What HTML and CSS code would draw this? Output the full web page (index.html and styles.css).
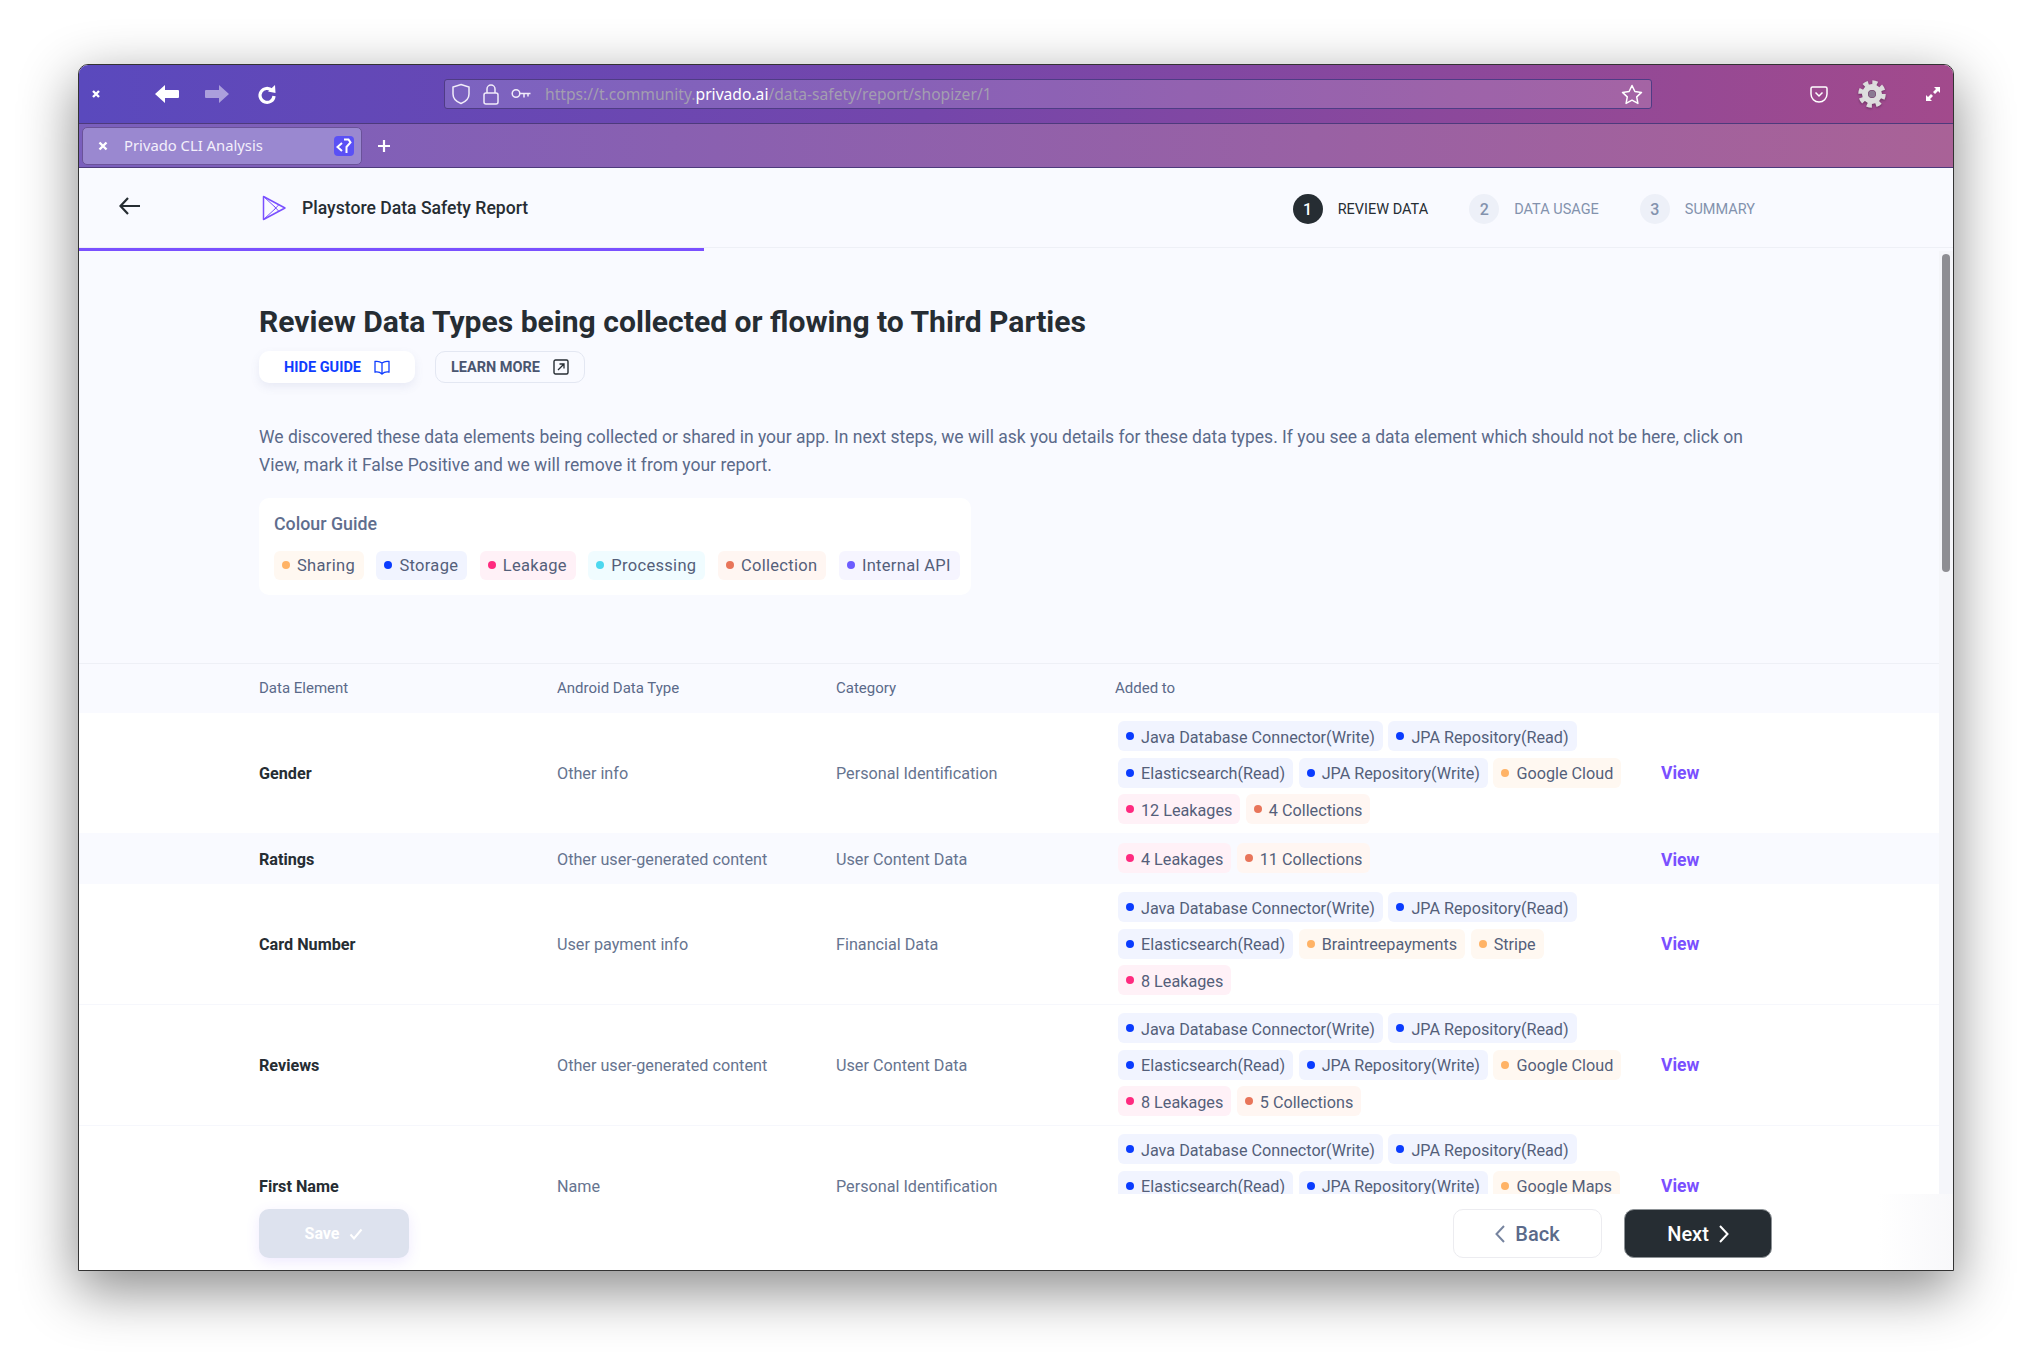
FILE: index.html
```html
<!DOCTYPE html>
<html lang="en">
<head>
    <meta charset="UTF-8">
    <title>Privado CLI Analysis</title>
    <link rel="stylesheet" href="styles.css">
</head>
<body>
    <div class="window">
        <div class="toolbar">
            <svg class="win-close" width="10" height="10" viewBox="0 0 10 10"><path d="M2 2l6 6M8 2l-6 6" stroke="#fff" stroke-width="2.4" fill="none"/></svg>
            <svg class="nav-back" width="24" height="18" viewBox="0 0 24 18"><path d="M0 9l10-9v5h13a1 1 0 0 1 1 1v6a1 1 0 0 1-1 1H10v5z" fill="#fff"/></svg>
            <svg class="nav-forward" width="24" height="18" viewBox="0 0 24 18"><path d="M24 9l-10-9v5H1a1 1 0 0 0-1 1v6a1 1 0 0 0 1 1h13v5z" fill="#ab9fdc"/></svg>
            <svg class="nav-reload" width="20" height="21" viewBox="0 0 20 21"><path d="M15 6.5A7 7 0 1 0 17 12" stroke="#fff" stroke-width="3.2" fill="none"/><path d="M11 7.5l7.5 1.5L18 1z" fill="#fff"/></svg>
            <div class="urlbar">
                <svg width="20" height="22" viewBox="0 0 20 22"><path d="M10 1.5l8 2.5v7c0 4.5-3.5 7.800-8 9.500-4.500-1.700-8-5-8-9.500V4z" stroke="#f1ecfa" stroke-width="1.500" fill="none"/></svg>
                <svg width="16" height="22" viewBox="0 0 16 22"><path d="M4 10V6a4 4 0 0 1 8 0v4" stroke="#f1ecfa" stroke-width="1.500" fill="none"/><rect x="1" y="10" width="14" height="11" rx="2" stroke="#f1ecfa" stroke-width="1.500" fill="none"/></svg>
                <svg width="20" height="12" viewBox="0 0 20 12"><circle cx="5" cy="5.500" r="3.800" stroke="#f1ecfa" stroke-width="1.500" fill="none"/><path d="M9 5.500h10.500M13 5.500v4M17 5.500v3" stroke="#f1ecfa" stroke-width="1.500" fill="none"/></svg>
                <div class="url"><span class="url-dim">https://t.community.</span>privado.ai<span class="url-dim">/data-safety/report/shopizer/1</span></div>
                <svg class="star" width="22" height="21" viewBox="0 0 22 21"><path d="M11 1.500l2.900 6 6.600.9-4.800 4.500 1.200 6.500-5.900-3.200-5.900 3.200 1.200-6.500L1.500 8.400l6.600-.9z" stroke="#fff" stroke-width="1.500" stroke-linejoin="round" fill="none"/></svg>
            </div>
            <svg class="pocket" width="18" height="17" viewBox="0 0 18 17"><path d="M2.500 1h13A1.500 1.500 0 0 1 17 2.500V8a8 8 0 0 1-16 0V2.500A1.500 1.500 0 0 1 2.500 1z" stroke="#fff" stroke-width="1.500" fill="none"/><path d="M5.500 6.500L9 10l3.500-3.500" stroke="#fff" stroke-width="1.500" fill="none"/></svg>
            <svg class="gear" width="28" height="28" viewBox="0 0 28 28"><circle cx="14" cy="14" r="11.500" fill="none" stroke="#dcdcdc" stroke-width="4.500" stroke-dasharray="5 4.030"/><circle cx="14" cy="14" r="7" fill="none" stroke="#dedede" stroke-width="6"/><circle cx="14" cy="14" r="3.500" fill="#8a7a92"/></svg>
            <svg class="expand" width="14" height="14" viewBox="0 0 14 14"><path d="M8 0h6v6l-2-2-3 3-2-2 3-3zM6 14H0V8l2 2 3-3 2 2-3 3z" fill="#fff"/></svg>
        </div>
        <div class="tabbar">
            <div class="tab">
                <svg width="10" height="10" viewBox="0 0 10 10"><path d="M1.500 1.500l7 7M8.500 1.500l-7 7" stroke="#fff" stroke-width="2.400" fill="none"/></svg>
                <span class="tab-title">Privado CLI Analysis</span>
                <svg class="favicon" width="20" height="20" viewBox="0 0 20 20"><rect width="20" height="20" rx="4" fill="#5a50f5"/><path d="M8 7l-4.500 4L8 15" stroke="#fff" stroke-width="2" fill="none"/><path d="M10 3.500h4.500l2 3-4 4.500v6" stroke="#fff" stroke-width="2" fill="none"/></svg>
            </div>
            <svg class="tab-new" width="12" height="12" viewBox="0 0 12 12"><path d="M6 0v12M0 6h12" stroke="#fff" stroke-width="2.200"/></svg>
        </div>

        <header class="app-header">
            <svg class="back-arrow" width="21" height="18" viewBox="0 0 21 18"><path d="M9 1L1.500 9 9 17M2 9h19" stroke="#262d33" stroke-width="2.200" fill="none"/></svg>
            <svg class="play-icon" width="24" height="26" viewBox="0 0 24 26"><path d="M1.500 1.500v23L23 13z" stroke="#7a50ff" stroke-width="1.500" stroke-linejoin="round" fill="none"/><path d="M1.500 1.500L14 13 1.500 24.500M17 9.500L12 15M17 16.500L12 11" stroke="#7a50ff" stroke-width="1" fill="none"/></svg>
            <span class="app-title">Playstore Data Safety Report</span>
            <div class="steps">
                <div class="step step-active"><span class="step-num">1</span>REVIEW DATA</div>
                <div class="step"><span class="step-num">2</span>DATA USAGE</div>
                <div class="step"><span class="step-num">3</span>SUMMARY</div>
            </div>
        </header>
        <div class="progress"><div class="progress-fill"></div></div>

        <div class="scroller">
            <main class="content">
                <div class="intro">
                    <h1>Review Data Types being collected or flowing to Third Parties</h1>
                    <div class="guide-btns">
                        <button class="btn-guide">HIDE GUIDE
                            <svg width="16" height="15" viewBox="0 0 16 15"><path d="M1 1.500c2.500-.5 5 0 7 1.500 2-1.500 4.500-2 7-1.500v10.500c-2.500-.5-5 0-7 2-2-2-4.500-2.500-7-2zM8 3v11" stroke="#0f3dff" stroke-width="1.300" fill="none"/></svg>
                        </button>
                        <button class="btn-learn">LEARN MORE
                            <svg width="16" height="16" viewBox="0 0 16 16"><rect x="1" y="1" width="14" height="14" rx="1.500" stroke="#262d33" stroke-width="1.400" fill="none"/><path d="M5 11l6-6M6.500 5H11v4.500" stroke="#262d33" stroke-width="1.300" fill="none"/></svg>
                        </button>
                    </div>
                    <p class="lead">We discovered these data elements being collected or shared in your app. In next steps, we will ask you details for these data types. If you see a data element which should not be here, click on View, mark it False Positive and we will remove it from your report.</p>
                    <div class="colour-guide">
                        <div class="guide-title">Colour Guide</div>
                        <div class="guide-chips">
                            <span class="chip sharing">Sharing</span>
                            <span class="chip storage">Storage</span>
                            <span class="chip leakage">Leakage</span>
                            <span class="chip processing">Processing</span>
                            <span class="chip collection">Collection</span>
                            <span class="chip internal">Internal API</span>
                        </div>
                    </div>
                </div>

                <div class="row row-head">
                    <div>Data Element</div>
                    <div>Android Data Type</div>
                    <div>Category</div>
                    <div>Added to</div>
                </div>

                <div class="row">
                    <div class="name">Gender</div>
                    <div>Other info</div>
                    <div>Personal Identification</div>
                    <div class="chips">
                        <span class="chip storage">Java Database Connector(Write)</span>
                        <span class="chip storage">JPA Repository(Read)</span>
                        <span class="chip storage">Elasticsearch(Read)</span>
                        <span class="chip storage">JPA Repository(Write)</span>
                        <span class="chip sharing">Google Cloud</span>
                        <span class="chip leakage">12 Leakages</span>
                        <span class="chip collection">4 Collections</span>
                    </div>
                    <a class="view">View</a>
                </div>

                <div class="row row-alt">
                    <div class="name">Ratings</div>
                    <div>Other user-generated content</div>
                    <div>User Content Data</div>
                    <div class="chips">
                        <span class="chip leakage">4 Leakages</span>
                        <span class="chip collection">11 Collections</span>
                    </div>
                    <a class="view">View</a>
                </div>

                <div class="row">
                    <div class="name">Card Number</div>
                    <div>User payment info</div>
                    <div>Financial Data</div>
                    <div class="chips">
                        <span class="chip storage">Java Database Connector(Write)</span>
                        <span class="chip storage">JPA Repository(Read)</span>
                        <span class="chip storage">Elasticsearch(Read)</span>
                        <span class="chip sharing">Braintreepayments</span>
                        <span class="chip sharing">Stripe</span>
                        <span class="chip leakage">8 Leakages</span>
                    </div>
                    <a class="view">View</a>
                </div>

                <div class="row row-line">
                    <div class="name">Reviews</div>
                    <div>Other user-generated content</div>
                    <div>User Content Data</div>
                    <div class="chips">
                        <span class="chip storage">Java Database Connector(Write)</span>
                        <span class="chip storage">JPA Repository(Read)</span>
                        <span class="chip storage">Elasticsearch(Read)</span>
                        <span class="chip storage">JPA Repository(Write)</span>
                        <span class="chip sharing">Google Cloud</span>
                        <span class="chip leakage">8 Leakages</span>
                        <span class="chip collection">5 Collections</span>
                    </div>
                    <a class="view">View</a>
                </div>

                <div class="row row-line">
                    <div class="name">First Name</div>
                    <div>Name</div>
                    <div>Personal Identification</div>
                    <div class="chips">
                        <span class="chip storage">Java Database Connector(Write)</span>
                        <span class="chip storage">JPA Repository(Read)</span>
                        <span class="chip storage">Elasticsearch(Read)</span>
                        <span class="chip storage">JPA Repository(Write)</span>
                        <span class="chip sharing">Google Maps</span>
                        <span class="chip leakage">6 Leakages</span>
                    </div>
                    <a class="view">View</a>
                </div>
            </main>
            <div class="scrollbar"><div class="thumb"></div></div>
        </div>

        <footer class="app-footer">
            <button class="btn-save">Save
                <svg width="14" height="12" viewBox="0 0 14 12"><path d="M1.500 6.500L5 10.500 12.500 1.500" stroke="#fff" stroke-width="2" fill="none"/></svg>
            </button>
            <div class="footer-nav">
                <button class="btn-back">
                    <svg width="10" height="18" viewBox="0 0 10 18"><path d="M9 1L1.500 9 9 17" stroke="#76849f" stroke-width="2" fill="none"/></svg>
                    Back
                </button>
                <button class="btn-next">Next
                    <svg width="10" height="18" viewBox="0 0 10 18"><path d="M1 1l7.500 8L1 17" stroke="#fff" stroke-width="2" fill="none"/></svg>
                </button>
            </div>
        </footer>
    </div>
</body>
</html>
```

FILE: styles.css
```css
* {
    box-sizing: border-box;
}

html, body {
    height: 100%;
}

body {
    margin: 0;
    padding: 64px 78px 92px;
    background-color: #fff;
    font-family: Roboto, Arial, sans-serif;
    overflow: hidden;
}

.window {
    display: flex;
    flex-direction: column;
    height: 1207px;
    border: 1px solid #333;
    border-radius: 10px 10px 0 0;
    background-color: #fff;
    box-shadow: 0 18px 55px 2px rgba(0, 0, 0, 0.45);
    overflow: hidden;
}

/* browser chrome */
.toolbar {
    display: flex;
    align-items: center;
    flex: 0 0 59px;
    background: linear-gradient(to right, #5a49bd, #7446ab 45%, #a24a8c);
    border-bottom: 1px solid #4d3a7c;
}

.win-close {
    margin-left: 12px;
}

.nav-back {
    margin-left: 54px;
}

.nav-forward {
    margin-left: 26px;
}

.nav-reload {
    margin-left: 28px;
}

.urlbar {
    display: flex;
    align-items: center;
    width: 1208px;
    height: 30px;
    margin-left: 167px;
    padding: 0 8px 0 6px;
    border: 1px solid #4f3c85;
    border-radius: 3px;
    background-color: rgba(255, 255, 255, 0.15);
    gap: 12px;
}

.url {
    flex: 1;
    margin-left: 2px;
    font-family: "Noto Sans", sans-serif;
    font-size: 15.650px;
    color: #fff;
    white-space: nowrap;
}

.url-dim {
    color: #a39eb0;
}

.pocket {
    margin-left: 158px;
}

.gear {
    margin-left: 30px;
    filter: drop-shadow(0 1px 1px rgba(0, 0, 0, 0.35));
}

.expand {
    margin-left: 40px;
}

.tabbar {
    display: flex;
    align-items: center;
    flex: 0 0 44px;
    padding-left: 3px;
    background: linear-gradient(to right, #7a5fbd, #a96297);
    border-bottom: 1px solid #4d3a7c;
}

.tab {
    display: flex;
    align-items: center;
    width: 280px;
    height: 38px;
    padding: 0 7px 0 15px;
    border: 1px solid #6a5299;
    border-radius: 5px;
    background-color: #9a88d0;
}

.tab-title {
    flex: 1;
    margin: -2px 0 0 16px;
    font-family: "Noto Sans", sans-serif;
    font-size: 14.800px;
    color: #f3effb;
}

.tab-new {
    margin-left: 16px;
}

/* app header */
.app-header {
    display: flex;
    align-items: center;
    flex: 0 0 80px;
    padding: 0 198px 0 40px;
    background-color: #f9faff;
    border-bottom: 1px solid #eef0f6;
}

.back-arrow {
    margin-top: -3px;
}

.play-icon {
    margin-left: 122px;
}

.app-title {
    margin-left: 16px;
    font-size: 17.600px;
    font-weight: 500;
    color: #262d33;
}

.steps {
    display: flex;
    margin-left: auto;
    margin-top: 3px;
    gap: 41px;
}

.step {
    display: flex;
    align-items: center;
    gap: 15px;
    font-size: 14.500px;
    color: #8392ad;
}

.step-num {
    display: flex;
    align-items: center;
    justify-content: center;
    width: 30px;
    height: 30px;
    border-radius: 50%;
    background-color: #edf0f8;
    font-size: 16px;
    font-weight: 500;
}

.step-active {
    color: #262d33;
}

.step-active .step-num {
    background-color: #262d33;
    color: #fff;
}

.progress {
    flex: 0 0 3px;
    background-color: #f9faff;
}

.progress-fill {
    width: 625px;
    height: 3px;
    background-color: #7a50ff;
}

/* main area */
.scroller {
    display: flex;
    flex: 1;
    min-height: 0;
    background-color: #f9faff;
}

.content {
    flex: 1;
    min-width: 0;
    overflow: hidden;
}

.scrollbar {
    flex: 0 0 14px;
    padding: 3px 3px 0;
    background-color: #f5f6fa;
}

.thumb {
    width: 8px;
    height: 318px;
    border-radius: 4px;
    background-color: #8e8e93;
}

.intro {
    padding: 53px 0 68px 180px;
}

h1 {
    margin: 0;
    font-size: 30.080px;
    line-height: 36px;
    font-weight: 700;
    color: #262d33;
}

.guide-btns {
    display: flex;
    margin-top: 11px;
    gap: 20px;
}

.guide-btns button {
    display: flex;
    align-items: center;
    justify-content: center;
    height: 32px;
    border-radius: 10px;
    font-family: Roboto, Arial, sans-serif;
    font-size: 14.500px;
    font-weight: 700;
    gap: 13px;
}

.btn-guide {
    width: 156px;
    border: none;
    background-color: #fff;
    color: #0f3dff;
    box-shadow: 0 4px 10px rgba(90, 100, 160, 0.1);
}

.btn-learn {
    width: 150px;
    border: 1px solid #e3e7f2;
    background-color: transparent;
    color: #4a5670;
}

.lead {
    width: 1500px;
    margin: 40px 0 19px;
    font-size: 17.500px;
    line-height: 28px;
    color: #5b6a8a;
}

.colour-guide {
    width: 712px;
    height: 97px;
    padding: 16px 15px 0;
    border-radius: 10px;
    background-color: #fff;
}

.guide-title {
    font-size: 17.800px;
    line-height: 20px;
    font-weight: 500;
    color: #5f6e8e;
}

.guide-chips {
    display: flex;
    margin-top: 17px;
    gap: 12.500px;
}

.chip {
    display: inline-flex;
    align-items: center;
    height: 29px;
    padding: 0 9px 0 8px;
    border-radius: 6px;
    font-size: 16.500px;
    letter-spacing: 0.3px;
    color: #545f7a;
    white-space: nowrap;
}

.chip::before {
    content: "";
    flex: none;
    width: 8px;
    height: 8px;
    margin-right: 7px;
    margin-top: -2px;
    border-radius: 50%;
}

.storage { background-color: #f1f4ff; }
.storage::before { background-color: #0a3cff; }
.sharing { background-color: #fff8f1; }
.sharing::before { background-color: #ffb366; }
.leakage { background-color: #fff1f7; }
.leakage::before { background-color: #ff2a7f; }
.processing { background-color: #f0fcff; }
.processing::before { background-color: #4dd8ef; }
.collection { background-color: #fff6f2; }
.collection::before { background-color: #e8755a; }
.internal { background-color: #f6f5ff; }
.internal::before { background-color: #6c5cff; }

/* table */
.row {
    display: grid;
    grid-template-columns: 298px 279px 279px 546px auto;
    align-items: center;
    padding-left: 180px;
    background-color: #fff;
    font-size: 16.200px;
    color: #66748f;
}

.row-head {
    height: 50px;
    padding-bottom: 2px;
    border-top: 1px solid #eef0f6;
    background-color: #f9faff;
    font-size: 15px;
    color: #5b6a8a;
}

.row-alt {
    padding-top: 2px;
    background-color: #f9faff;
}

.row-line {
    border-top: 1px solid #f6f7fc;
}

.name {
    font-weight: 700;
    color: #262d33;
}

.chips {
    display: flex;
    flex-wrap: wrap;
    padding: 8px 16px 9px 3px;
    gap: 6.500px 5.500px;
}

.row-alt .chips {
    padding: 8px 16px 11px 3px;
}

.chips .chip {
    height: 30px;
    padding: 2px 8px 0;
    font-size: 16.200px;
    letter-spacing: 0;
}

.view {
    font-size: 17.500px;
    font-weight: 700;
    color: #7a50ff;
}

/* footer */
.app-footer {
    display: flex;
    justify-content: space-between;
    align-items: flex-start;
    flex: 0 0 76px;
    padding: 15px 181px 0 180px;
    background: linear-gradient(to right, #fff 96%, #f8f8fa);
}

.footer-nav {
    display: flex;
    gap: 22px;
}

.app-footer button {
    display: flex;
    align-items: center;
    justify-content: center;
    height: 49px;
    border-radius: 10px;
    font-family: Roboto, Arial, sans-serif;
    gap: 10px;
}

.btn-save {
    width: 150px;
    border: none;
    background-color: #dde2ee;
    color: #fff;
    font-size: 16px;
    font-weight: 700;
    box-shadow: 0 4px 14px rgba(122, 80, 255, 0.12);
}

.btn-back {
    width: 149px;
    border: 1px solid #ececf0;
    background-color: #fff;
    color: #5b6a8a;
    font-size: 20px;
    font-weight: 500;
}

.btn-next {
    width: 148px;
    border: 1px solid #8d9296;
    background-color: #262d33;
    color: #fff;
    font-size: 20px;
    font-weight: 500;
}
```
